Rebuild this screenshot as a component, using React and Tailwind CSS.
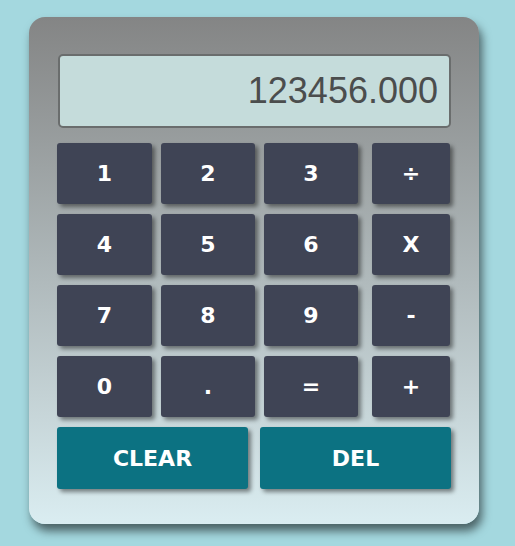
import React from "react";

const font = { fontFamily: '"DejaVu Sans", Verdana, sans-serif' };

function Key({ label, w, extra = "" }) {
  return (
    <button
      className={`h-[61px] ${w} ${extra} rounded-[3px] bg-[#3f4455] text-white text-[22px] font-bold flex items-center justify-center shadow-[3px_3px_4px_rgba(0,0,0,0.45)]`}
      style={font}
    >
      {label}
    </button>
  );
}

export default function App() {
  const rows = [
    ["1", "2", "3", "÷"],
    ["4", "5", "6", "X"],
    ["7", "8", "9", "-"],
    ["0", ".", "=", "+"],
  ];
  return (
    <div className="w-[515px] h-[546px] bg-[#a4d8df] pt-[17px] pl-[29px]">
      <div className="w-[450px] h-[507px] rounded-[16px] bg-gradient-to-b from-[#848585] to-[#daedf1] shadow-[3px_7px_10px_rgba(0,0,0,0.55)] pt-[37px] pl-[28px] flex flex-col">
        <div className="w-[393px] h-[74px] ml-[1px] rounded-[5px] border-2 border-[#6a6d6d] bg-[#c5dcdb] flex items-center justify-end pr-[11px]">
          <span
            className="text-[36px] text-[#4b4d4d] leading-none"
            style={{ fontFamily: '"Liberation Sans", Arial, sans-serif' }}
          >
            123456.000
          </span>
        </div>
        <div className="mt-[15px] flex flex-col gap-[10px]">
          {rows.map((r, i) => (
            <div key={i} className="flex gap-[9px]">
              <Key label={r[0]} w="w-[95px]" />
              <Key label={r[1]} w="w-[94px]" />
              <Key label={r[2]} w="w-[94px]" />
              <Key label={r[3]} w="w-[78px]" extra="ml-[5px]" />
            </div>
          ))}
          <div className="flex gap-[12px]">
            <button
              className="h-[62px] w-[191px] rounded-[3px] bg-[#0c7282] text-white text-[22px] font-bold flex items-center justify-center shadow-[3px_3px_4px_rgba(0,0,0,0.45)]"
              style={font}
            >
              CLEAR
            </button>
            <button
              className="h-[62px] w-[191px] rounded-[3px] bg-[#0c7282] text-white text-[22px] font-bold flex items-center justify-center shadow-[3px_3px_4px_rgba(0,0,0,0.45)]"
              style={font}
            >
              DEL
            </button>
          </div>
        </div>
      </div>
    </div>
  );
}
